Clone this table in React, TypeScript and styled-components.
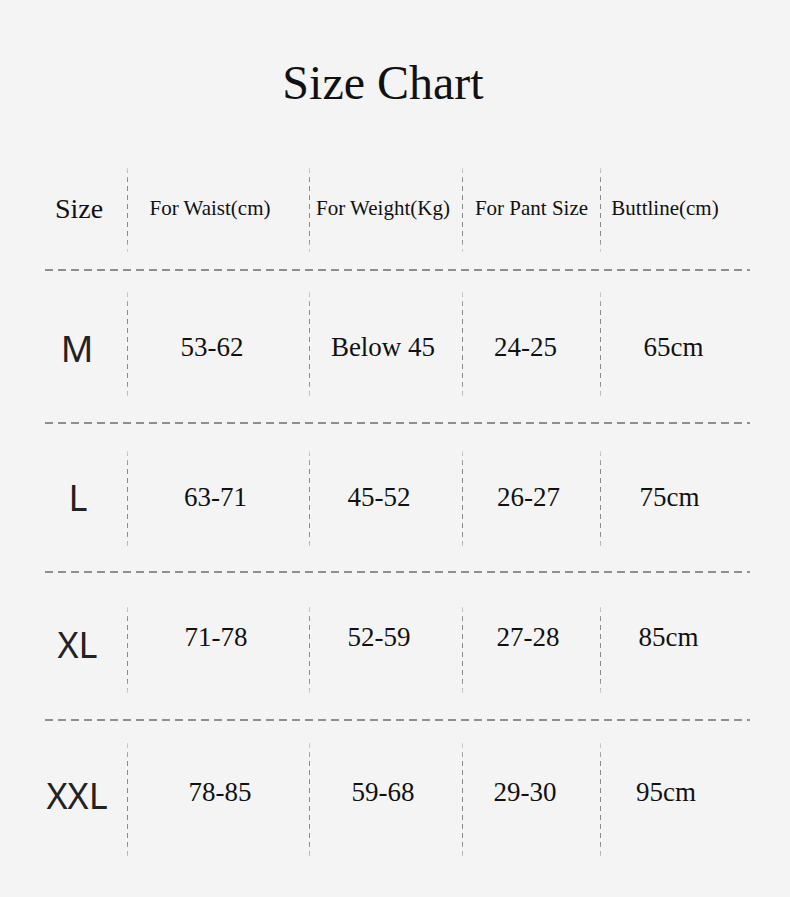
import React from 'react';
import styled, { createGlobalStyle } from 'styled-components';

const GlobalStyle = createGlobalStyle`
  html, body {
    margin: 0;
    padding: 0;
    background: #f4f4f4;
  }
`;

const Page = styled.div`
  width: 790px;
  height: 897px;
  padding-top: 54px;
  box-sizing: border-box;
  background: #f4f4f4;
  font-family: 'Liberation Serif', 'Times New Roman', serif;
  color: #111;
  overflow: hidden;
`;

const Title = styled.h1`
  margin: 0 0 48px;
  padding-right: 24px;
  text-align: center;
  font-size: 48px;
  line-height: 58px;
  font-weight: 400;
`;

const Table = styled.div`
  margin-left: 45px;
  width: 705px;
  display: flex;
  flex-direction: column;
`;

const Row = styled.div<{ $height: number }>`
  display: grid;
  grid-template-columns: 82px 1px 181px 1px 152px 1px 137px 1px 149px;
  height: ${p => p.$height}px;
`;

const Rule = styled.div`
  height: 2px;
  background: repeating-linear-gradient(
    to right,
    #8f8f8f 0 8px,
    transparent 8px 13px
  );
`;

const Divider = styled.div<{ $top: number; $bottom: number }>`
  margin: ${p => p.$top}px 0 ${p => p.$bottom}px;
  background: repeating-linear-gradient(
    to bottom,
    #8a8a8a 0 5px,
    transparent 5px 9px
  );
  -webkit-mask-image: linear-gradient(to bottom, rgba(0, 0, 0, 0.3), #000 15%, #000 85%, rgba(0, 0, 0, 0.3));
  mask-image: linear-gradient(to bottom, rgba(0, 0, 0, 0.3), #000 15%, #000 85%, rgba(0, 0, 0, 0.3));
`;

const Cell = styled.div<{ $dx: number; $dy: number }>`
  display: flex;
  align-items: center;
  justify-content: center;
  white-space: nowrap;
  padding-left: ${p => Math.max(0, p.$dx * 2)}px;
  padding-right: ${p => Math.max(0, -p.$dx * 2)}px;
  padding-top: ${p => Math.max(0, p.$dy * 2)}px;
  padding-bottom: ${p => Math.max(0, -p.$dy * 2)}px;
`;

const HeadText = styled.span<{ $big?: boolean }>`
  font-size: ${p => (p.$big ? 28 : 21)}px;
  line-height: 1.2;
`;

const SizeText = styled.span`
  font-family: 'Noto Sans', 'Liberation Sans', sans-serif;
  font-size: 36px;
  line-height: 1.2;
  color: #222;
`;

const ValueText = styled.span`
  font-size: 27px;
  line-height: 1.2;
`;

type Entry = { text: string; dx: number };

type RowData = {
  height: number;
  top: number;
  bottom: number;
  sizeDy: number;
  valueDy: number;
  cells: Entry[];
};

const header: RowData = {
  height: 109,
  top: 8,
  bottom: 17,
  sizeDy: -5.5,
  valueDy: -5.5,
  cells: [
    { text: 'Size', dx: -7 },
    { text: 'For Waist(cm)', dx: -8.5 },
    { text: 'For Weight(Kg)', dx: -3 },
    { text: 'For Pant Size', dx: 0 },
    { text: 'Buttline(cm)', dx: -10.5 },
  ],
};

const rows: RowData[] = [
  {
    height: 151,
    top: 21,
    bottom: 24,
    sizeDy: 2,
    valueDy: 0.5,
    cells: [
      { text: 'M', dx: -9 },
      { text: '53-62', dx: -6.5 },
      { text: 'Below 45', dx: -3 },
      { text: '24-25', dx: -6 },
      { text: '65cm', dx: -2 },
    ],
  },
  {
    height: 147,
    top: 27,
    bottom: 22,
    sizeDy: 0,
    valueDy: 0,
    cells: [
      { text: 'L', dx: -8 },
      { text: '63-71', dx: -3 },
      { text: '45-52', dx: -7 },
      { text: '26-27', dx: -3 },
      { text: '75cm', dx: -6 },
    ],
  },
  {
    height: 146,
    top: 34,
    bottom: 26,
    sizeDy: -1,
    valueDy: -9,
    cells: [
      { text: 'XL', dx: -8.5 },
      { text: '71-78', dx: -2.5 },
      { text: '52-59', dx: -7 },
      { text: '27-28', dx: -3.5 },
      { text: '85cm', dx: -7 },
    ],
  },
  {
    height: 150,
    top: 22,
    bottom: 11,
    sizeDy: 0,
    valueDy: -4,
    cells: [
      { text: 'XXL', dx: -9 },
      { text: '78-85', dx: 1.5 },
      { text: '59-68', dx: -3 },
      { text: '29-30', dx: -6.5 },
      { text: '95cm', dx: -9.5 },
    ],
  },
];

const renderRow = (row: RowData, isHeader: boolean) => {
  const out: React.ReactNode[] = [];
  row.cells.forEach((c, i) => {
    if (i > 0) {
      out.push(<Divider key={'d' + i} $top={row.top} $bottom={row.bottom} />);
    }
    const dy = i === 0 ? row.sizeDy : row.valueDy;
    let content: React.ReactNode;
    if (isHeader) content = <HeadText $big={i === 0}>{c.text}</HeadText>;
    else if (i === 0) content = <SizeText>{c.text}</SizeText>;
    else content = <ValueText>{c.text}</ValueText>;
    out.push(
      <Cell key={'c' + i} $dx={c.dx} $dy={dy}>
        {content}
      </Cell>,
    );
  });
  return out;
};

const App: React.FC = () => {
  return (
    <>
      <GlobalStyle />
      <Page>
        <Title>Size Chart</Title>
        <Table>
          <Row $height={header.height}>{renderRow(header, true)}</Row>
          {rows.map((row, i) => (
            <React.Fragment key={i}>
              <Rule />
              <Row $height={row.height}>{renderRow(row, false)}</Row>
            </React.Fragment>
          ))}
        </Table>
      </Page>
    </>
  );
};

export default App;
